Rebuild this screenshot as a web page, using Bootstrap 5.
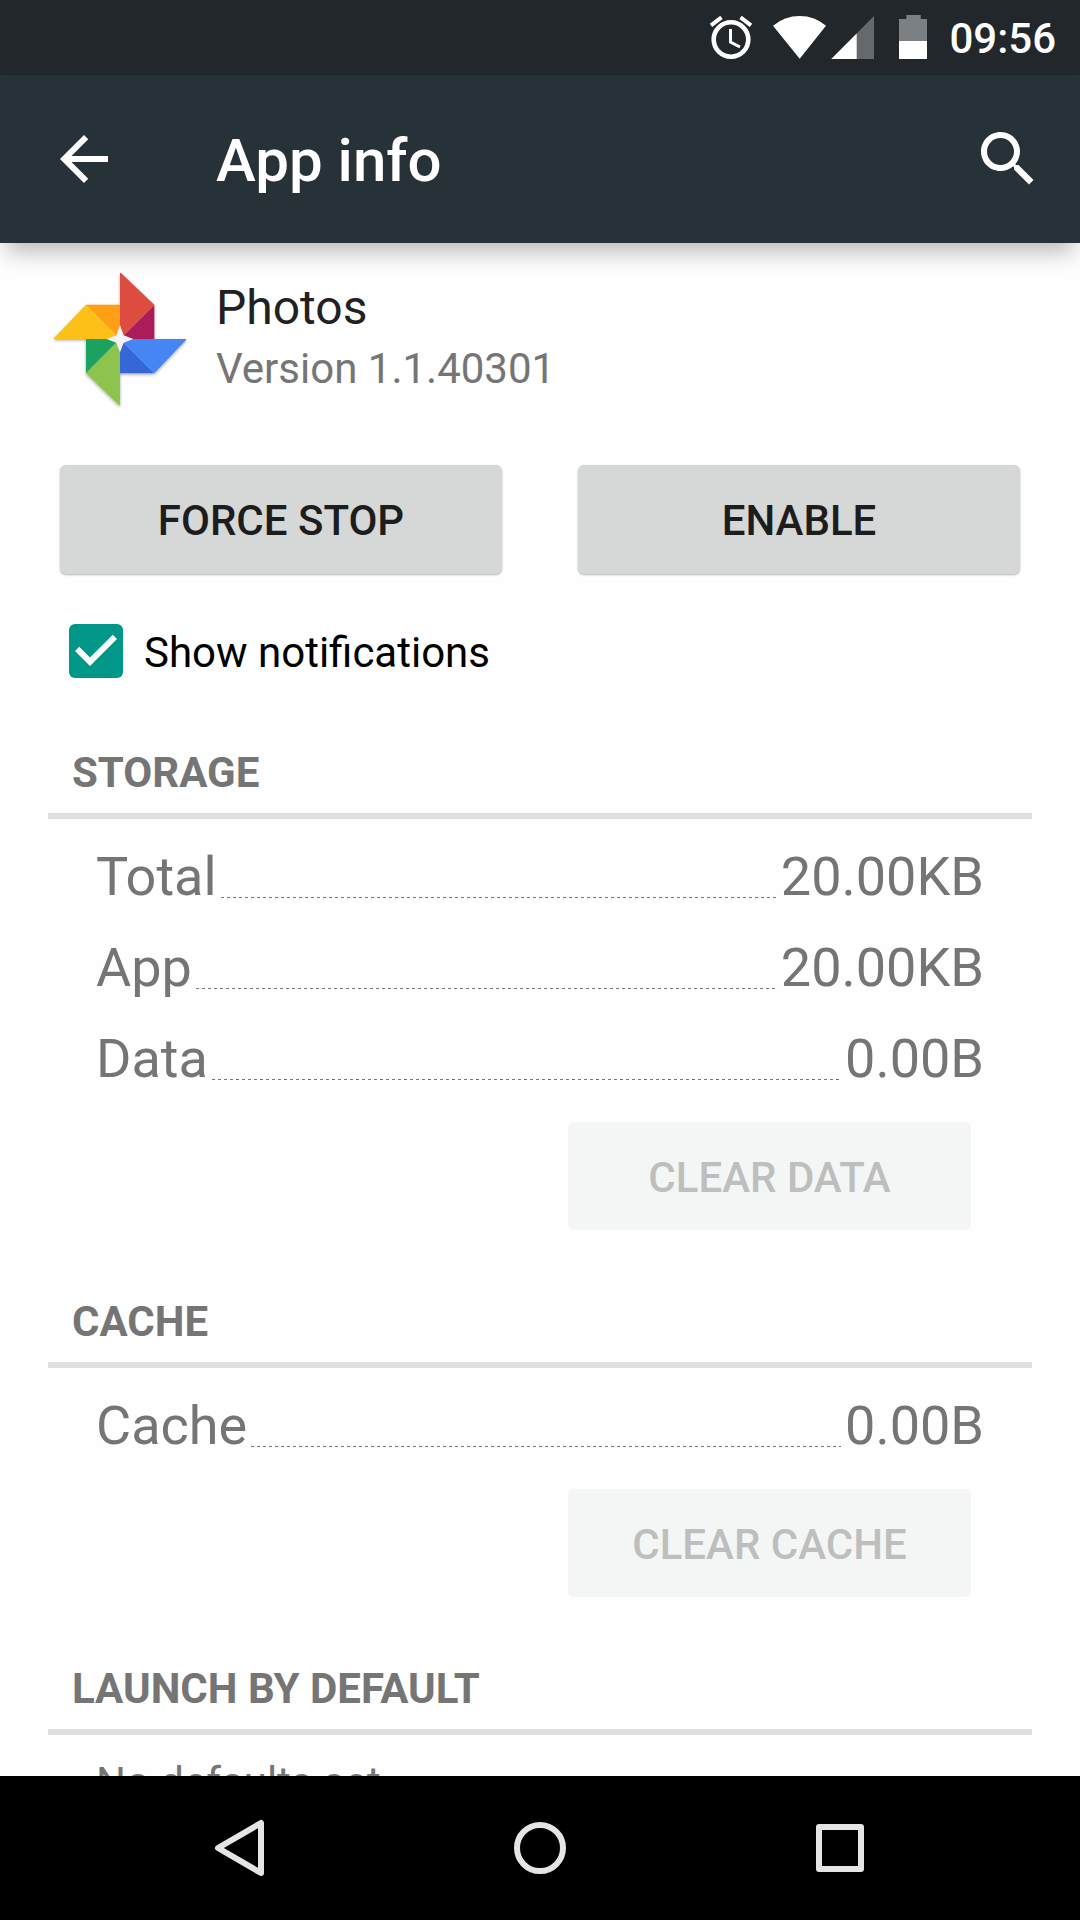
<!DOCTYPE html>
<html lang="en">
<head>
<meta charset="utf-8">
<meta name="viewport" content="width=device-width, initial-scale=1">
<title>App info</title>
<link href="https://cdn.jsdelivr.net/npm/bootstrap@5.3.0/dist/css/bootstrap.min.css" rel="stylesheet">
<style>
  body { font-family: Roboto, "Liberation Sans", sans-serif; font-size: 42px; line-height: 50px; color: #212121; background: #fefefe; }
  svg { display: block; flex: none; }
  .status-bar { height: 75px; padding-right: 24px; background: #21272b; color: #fff; }
  .status-bar time { padding-left: 22px; line-height: 78px; font-weight: 500; }
  .app-bar { height: 168px; padding: 0 36px 0 48px; background: #263238; color: #fff; box-shadow: 0 15px 22px -6px rgba(0,0,0,.27); z-index: 2; }
  .app-title { font-size: 60px; line-height: 72px; font-weight: 500; margin-left: 96px; padding-top: 4px; }
  .icon-btn { background: none; border: 0; padding: 0; color: inherit; }
  .content-pane { min-height: 0; scrollbar-width: none; }
  .content-pane::-webkit-scrollbar { display: none; }
  .app-head { padding: 24px 48px 0; gap: 24px; }
  .app-head-text { padding-top: 12px; }
  .app-name { font-size: 48px; line-height: 58px; }
  .soft { color: #757575; }
  .app-version { line-height: 54px; margin-top: 5px; }
  .actions { padding: 0 60px; margin-top: 54px; gap: 76px; }
  .btn-flat { --bs-btn-font-size: 42px; --bs-btn-line-height: 50px; --bs-btn-font-weight: 500; --bs-btn-border-width: 0;
    --bs-btn-border-radius: 6px; --bs-btn-color: #1d1d1d; --bs-btn-bg: #d6d8d7; --bs-btn-hover-bg: #cccecd;
    --bs-btn-disabled-color: #bdbfbe; --bs-btn-disabled-bg: #f4f6f5; --bs-btn-disabled-opacity: 1;
    padding: 31px 12px 28px; line-height: 50px; box-shadow: 0 1px 2px rgba(0,0,0,.3); }
  .btn-flat:disabled { padding: 31px 12px 27px; min-width: 403px; box-shadow: none; }
  .notify-row { min-height: 60px; margin-top: 47px; padding: 0 69px; }
  .notify-row .form-check-input { width: 54px; height: 54px; margin: 0 21px 0 0; float: none; border: 0; border-radius: 6px; background-size: 54px 54px; }
  .notify-row .form-check-input:checked { background-color: #009688;
    background-image: url("data:image/svg+xml,%3csvg xmlns='http://www.w3.org/2000/svg' viewBox='3 3 18 18'%3e%3cpath fill='%23fff' d='M10 17l-5-5 1.41-1.41L10 14.17l7.59-7.59L19 8z'/%3e%3c/svg%3e"); }
  .notify-row label { color: #000; line-height: 54px; padding-top: 4px; }
  .info-section { margin: 67px 48px 0; color: #757575; }
  .info-section h2 { font-size: 42px; line-height: 50px; font-weight: 700; margin: 0; padding: 0 24px 15px; border-bottom: 6px solid #e0e0e0; }
  .info-body { padding: 25px 48px 0; }
  .info-body p { line-height: 46px; }
  .size-list { font-size: 54px; line-height: 66px; gap: 25px; }
  .size-list dt { font-weight: 400; }
  .leader { height: 1px; margin: 0 4px 12px; background: repeating-linear-gradient(90deg, #757575 0 3px, transparent 3px 6px); }
  .clear-row { padding: 30px 13px 0; }
  .nav-keys { height: 144px; padding: 0 90px; background: #000; color: #e5e5e5; }
</style>
<script src="https://cdn.jsdelivr.net/npm/bootstrap@5.3.0/dist/js/bootstrap.bundle.min.js" defer></script>
</head>
<body class="d-flex flex-column vh-100 overflow-hidden">

<div class="status-bar d-flex justify-content-end align-items-start flex-shrink-0">
  <svg width="218" height="60" viewBox="709 0 218 60" fill="#fff" role="img" aria-label="Alarm set, Wi-Fi, mobile signal, battery">
    <g fill="none" stroke="#fff">
      <circle cx="731" cy="39.500" r="17.300" stroke-width="4.600"/>
      <path d="M730.500 29v13l9.500 5" stroke-width="3"/>
      <path d="M711 25.300l10.500-8M751 25.300l-10.500-8" stroke-width="4"/>
    </g>
    <path d="M773 25.700Q784.500 16 799.700 16T826 25.700L799.700 58.700z"/>
    <path d="M831.300 59L874 16v43z" fill-opacity=".31"/>
    <path d="M831.300 59L856.700 33.400V59z"/>
    <path d="M899 19h7.300v-4h14.400v4h6.300v22H899z" fill-opacity=".41"/>
    <path d="M899 41h28v18H899z"/>
  </svg>
  <time>09:56</time>
</div>

<header class="app-bar d-flex align-items-center flex-shrink-0 position-relative">
  <button class="icon-btn" type="button" aria-label="Back">
    <svg width="72" height="72" viewBox="0 0 24 24" fill="currentColor"><path d="M20 11H7.830l5.590-5.590L12 4l-8 8 8 8 1.410-1.410L7.830 13H20z"/></svg>
  </button>
  <h1 class="app-title mb-0 me-auto">App info</h1>
  <button class="icon-btn" type="button" aria-label="Search">
    <svg width="72" height="72" viewBox="0 0 24 24" fill="currentColor"><path d="M15.500 14h-.790l-.280-.270C15.410 12.590 16 11.110 16 9.500 16 5.910 13.090 3 9.500 3S3 5.910 3 9.500 5.910 16 9.500 16c1.610 0 3.090-.590 4.230-1.570l.270.280v.790l5 4.990L20.490 19l-4.990-5zm-6 0C7.010 14 5 11.990 5 9.500S7.010 5 9.500 5 14 7.010 14 9.500 11.990 14 9.500 14z"/></svg>
  </button>
</header>

<main class="content-pane flex-grow-1 overflow-auto">
  <div class="app-head d-flex align-items-start">
    <svg width="144" height="144" viewBox="54 51 432 432" role="img" aria-label="Photos icon">
      <defs>
        <filter id="drop" x="-10%" y="-10%" width="120%" height="120%"><feDropShadow dx="0" dy="4" stdDeviation="4" flood-opacity=".35"/></filter>
      </defs>
      <g filter="url(#drop)">
        <path fill="#ff9f14" d="M168 164H270V267z"/>
        <path fill="#fdc013" d="M168 164L72 264v3H270z"/>
        <path fill="#ad1a5a" d="M373 164V267H270z"/>
        <path fill="#dc4e41" d="M270 69h3L373 164 270 267z"/>
        <path fill="#3668d6" d="M270 267V370H373z"/>
        <path fill="#4486f4" d="M270 267H468v3L373 370z"/>
        <path fill="#1ba261" d="M168 370V267H270z"/>
        <path fill="#8dc44e" d="M168 370L270 267V466h-3z"/>
      </g>
      <path fill="#f3f3f3" d="M270 226L281 256 310 267 281 278 270 307 259 278 230 267 259 256z"/>
    </svg>
    <div class="app-head-text">
      <div class="app-name">Photos</div>
      <div class="app-version soft">Version 1.1.40301</div>
    </div>
  </div>

  <div class="actions d-flex">
    <button type="button" class="btn btn-flat w-100">FORCE STOP</button>
    <button type="button" class="btn btn-flat w-100">ENABLE</button>
  </div>

  <div class="notify-row d-flex align-items-center">
    <input class="form-check-input flex-shrink-0" type="checkbox" id="notify" checked>
    <label for="notify">Show notifications</label>
  </div>

  <section class="info-section">
    <h2>STORAGE</h2>
    <div class="info-body">
      <dl class="size-list d-flex flex-column mb-0">
        <div class="d-flex"><dt>Total</dt><span class="leader flex-grow-1 align-self-end"></span><dd class="mb-0">20.00KB</dd></div>
        <div class="d-flex"><dt>App</dt><span class="leader flex-grow-1 align-self-end"></span><dd class="mb-0">20.00KB</dd></div>
        <div class="d-flex"><dt>Data</dt><span class="leader flex-grow-1 align-self-end"></span><dd class="mb-0">0.00B</dd></div>
      </dl>
      <div class="clear-row d-flex justify-content-end"><button type="button" class="btn btn-flat" disabled>CLEAR DATA</button></div>
    </div>
  </section>

  <section class="info-section">
    <h2>CACHE</h2>
    <div class="info-body">
      <dl class="size-list d-flex flex-column mb-0">
        <div class="d-flex"><dt>Cache</dt><span class="leader flex-grow-1 align-self-end"></span><dd class="mb-0">0.00B</dd></div>
      </dl>
      <div class="clear-row d-flex justify-content-end"><button type="button" class="btn btn-flat" disabled>CLEAR CACHE</button></div>
    </div>
  </section>

  <section class="info-section">
    <h2>LAUNCH BY DEFAULT</h2>
    <div class="info-body"><p class="mb-0">No defaults set</p></div>
  </section>
</main>

<nav class="nav-keys d-flex align-items-center flex-shrink-0" aria-label="System navigation">
  <button class="icon-btn w-100 h-100 d-flex justify-content-center align-items-center" type="button" aria-label="Back">
    <svg width="72" height="72" viewBox="0 0 72 72" fill="none" stroke="currentColor" stroke-width="6" stroke-linejoin="round"><path d="M57 11V61L14 36z"/></svg>
  </button>
  <button class="icon-btn w-100 h-100 d-flex justify-content-center align-items-center" type="button" aria-label="Home">
    <svg width="72" height="72" viewBox="0 0 72 72" fill="none" stroke="currentColor" stroke-width="6"><circle cx="36" cy="36" r="23"/></svg>
  </button>
  <button class="icon-btn w-100 h-100 d-flex justify-content-center align-items-center" type="button" aria-label="Recent apps">
    <svg width="72" height="72" viewBox="0 0 72 72" fill="none" stroke="currentColor" stroke-width="6" stroke-linejoin="round"><path d="M15 15H57V57H15z"/></svg>
  </button>
</nav>
</body>
</html>
